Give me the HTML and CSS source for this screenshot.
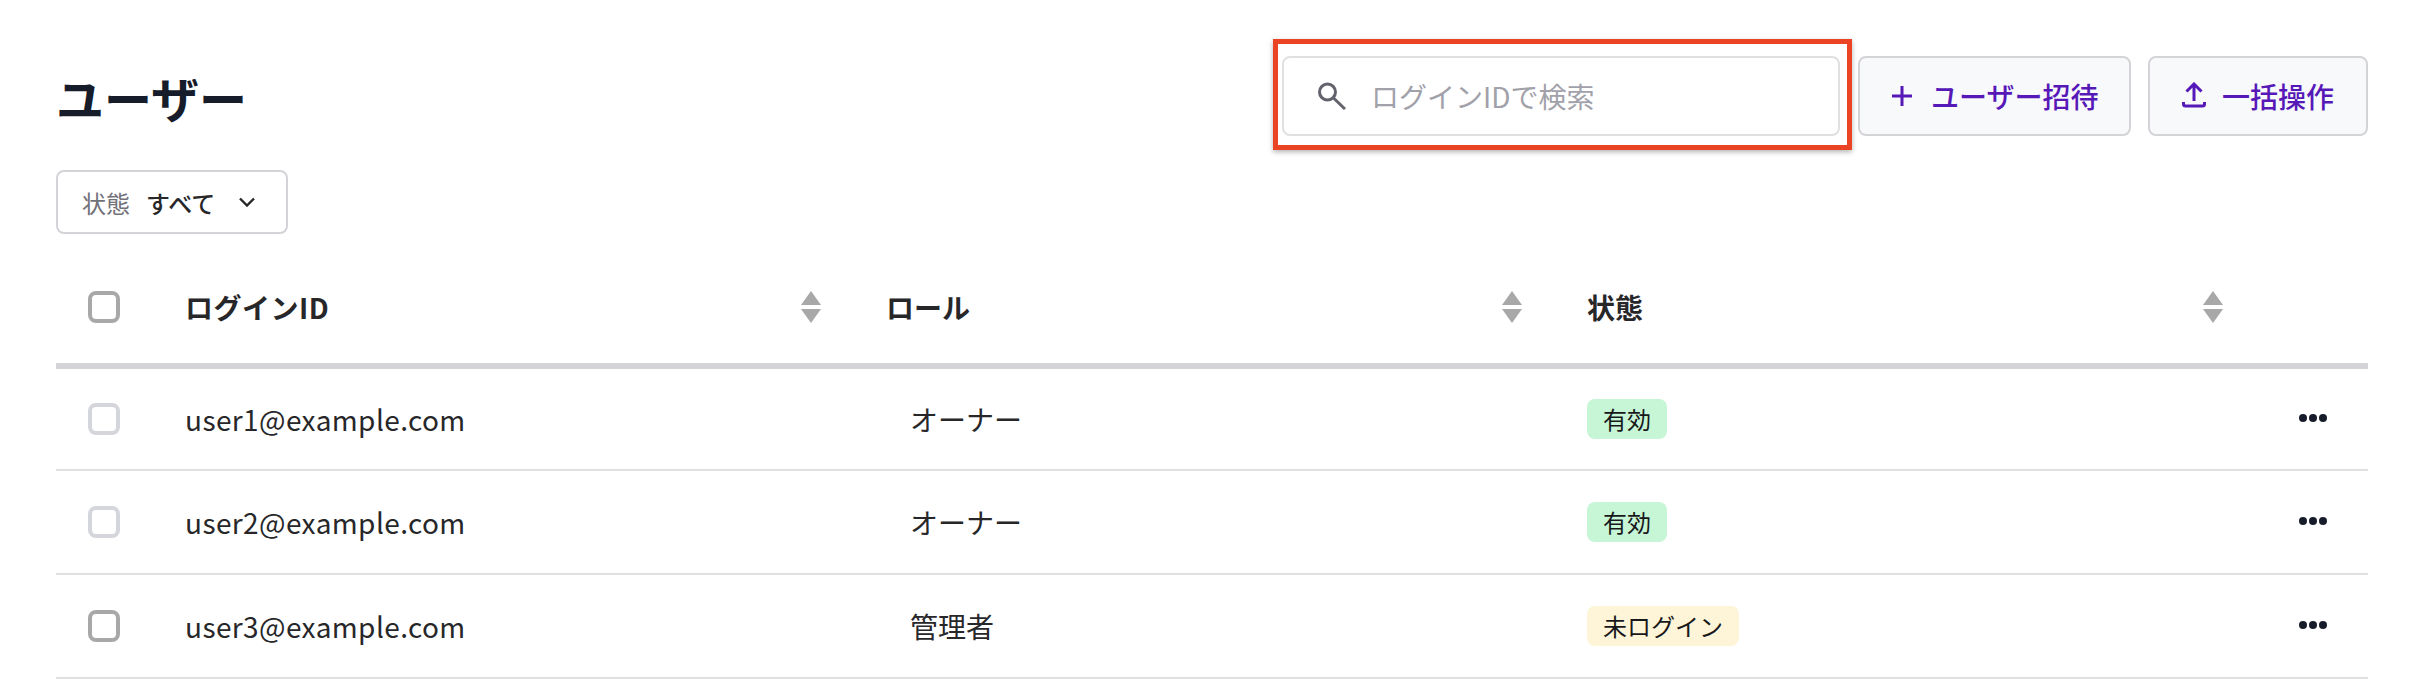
FILE: index.html
```html
<!DOCTYPE html>
<html lang="ja">
<head>
  <meta charset="utf-8">
  <title>ユーザー</title>
  <link rel="stylesheet" href="styles.css">
</head>
<body>
  <div class="page">
    <div class="topbar">
      <h1 class="title">ユーザー</h1>
      <div class="actions">
        <div class="search">
          <svg class="search-icon" viewBox="0 0 28 28"><circle cx="9.500" cy="10" r="8" fill="none" stroke="#63636e" stroke-width="3"/><path d="M15.500 16L27 27" fill="none" stroke="#63636e" stroke-width="3"/></svg>
          <span class="placeholder">ログインIDで検索</span>
          <div class="highlight"></div>
        </div>
        <button class="button invite">
          <svg class="plus-icon" viewBox="0 0 20 20"><path d="M10 0V20M0 10H20" fill="none" stroke="#5718b8" stroke-width="3"/></svg>
          ユーザー招待
        </button>
        <button class="button bulk">
          <svg class="upload-icon" viewBox="0 0 24 26"><path d="M12 19V2M4.500 9.500L12 2L19.500 9.500M1.500 20V22Q1.500 24 3.500 24H20.500Q22.500 24 22.500 22V20" fill="none" stroke="#5718b8" stroke-width="3"/></svg>
          一括操作
        </button>
      </div>
    </div>

    <div class="filter">
      <span class="filter-label">状態</span>
      <span class="filter-value">すべて</span>
      <svg class="chevron" viewBox="0 0 16 10"><path d="M1 1.500L8 8.500L15 1.500" fill="none" stroke="#27272a" stroke-width="2.400"/></svg>
    </div>

    <div class="row head">
      <div class="cell check"><span class="checkbox dark"></span></div>
      <div class="cell sortable login-head">ログインID <span class="sort"></span></div>
      <div class="cell sortable">ロール <span class="sort"></span></div>
      <div class="cell sortable">状態 <span class="sort"></span></div>
      <div class="cell"></div>
    </div>

    <div class="row">
      <div class="cell check"><span class="checkbox"></span></div>
      <div class="cell email">user1@example.com</div>
      <div class="cell role">オーナー</div>
      <div class="cell"><span class="badge green">有効</span></div>
      <div class="cell more"><span class="dots"><i></i><i></i><i></i></span></div>
    </div>
    <div class="row">
      <div class="cell check"><span class="checkbox"></span></div>
      <div class="cell email">user2@example.com</div>
      <div class="cell role">オーナー</div>
      <div class="cell"><span class="badge green">有効</span></div>
      <div class="cell more"><span class="dots"><i></i><i></i><i></i></span></div>
    </div>
    <div class="row">
      <div class="cell check"><span class="checkbox dark"></span></div>
      <div class="cell email">user3@example.com</div>
      <div class="cell role">管理者</div>
      <div class="cell"><span class="badge yellow">未ログイン</span></div>
      <div class="cell more"><span class="dots"><i></i><i></i><i></i></span></div>
    </div>
  </div>
</body>
</html>
```

FILE: styles.css
```css
html, body {
  margin: 0;
  background-color: #fff;
}
body {
  font-family: "Noto Sans CJK JP", "Noto Sans", sans-serif;
  font-size: 28px;
  color: #27272a;
}
.page {
  padding: 56px 64px 0 56px;
}
.topbar {
  display: flex;
  justify-content: space-between;
  align-items: center;
}
.title {
  margin: 2px 0 0;
  font-size: 48px;
  line-height: 72px;
  font-weight: 700;
  color: #171c2b;
}
.actions {
  display: flex;
  gap: 18px;
}
.search {
  position: relative;
  display: flex;
  align-items: center;
  box-sizing: border-box;
  width: 558px;
  height: 80px;
  padding-left: 34px;
  border: 2px solid #e0e0e3;
  border-radius: 8px;
}
.search-icon {
  width: 28px;
  height: 28px;
  margin-right: 25px;
}
.placeholder {
  color: #a1a1aa;
}
.highlight {
  position: absolute;
  top: -19px;
  left: -11px;
  right: -14px;
  bottom: -16px;
  border: 5px solid #ea4425;
  box-shadow: 0 2px 5px rgba(0, 0, 0, 0.3);
}
.button {
  display: flex;
  align-items: center;
  box-sizing: border-box;
  height: 80px;
  padding: 0 0 0 32px;
  font: inherit;
  font-weight: 500;
  white-space: nowrap;
  color: #5718b8;
  background-color: #f8f9fb;
  border: 2px solid #d4d4d8;
  border-radius: 8px;
}
.invite {
  width: 273px;
}
.bulk {
  width: 220px;
  margin-left: -1px;
}
.plus-icon {
  width: 20px;
  height: 20px;
  margin-right: 19px;
}
.upload-icon {
  width: 24px;
  height: 26px;
  margin: -2px 16px 0 0;
}
.filter {
  display: inline-flex;
  align-items: center;
  box-sizing: border-box;
  width: 232px;
  height: 64px;
  margin-top: 34px;
  padding-left: 24px;
  font-size: 24px;
  border: 2px solid #d4d4d8;
  border-radius: 8px;
}
.filter-label {
  color: #71717a;
  margin-right: 16px;
}
.filter-value {
  margin-right: 24px;
  font-weight: 500;
}
.chevron {
  width: 16px;
  height: 10px;
}
.row {
  display: grid;
  grid-template-columns: 129px 701px 701px 701px 80px;
  height: 104px;
  border-bottom: 2px solid #e0e0e3;
  box-sizing: border-box;
}
.head {
  height: 118px;
  margin-top: 17px;
  border-bottom: 6px solid #d4d4d8;
  font-weight: 700;
}
.head + .row {
  height: 102px;
}
.cell {
  display: flex;
  align-items: center;
  min-width: 0;
}
.check {
  padding-left: 32px;
}
.checkbox {
  box-sizing: border-box;
  width: 32px;
  height: 32px;
  border: 4px solid #d4d6dc;
  border-radius: 8px;
}
.checkbox.dark {
  border-color: #a8a8a8;
}
.sortable {
  justify-content: space-between;
  padding-right: 66px;
}
.login-head {
  letter-spacing: 0.5px;
}
.sort {
  display: flex;
  flex-direction: column;
  gap: 4px;
  width: 19px;
}
.sort::before,
.sort::after {
  content: "";
  width: 0;
  height: 0;
  border-left: 10px solid transparent;
  border-right: 10px solid transparent;
}
.sort::before {
  border-bottom: 14px solid #a8a8a8;
}
.sort::after {
  border-top: 14px solid #a8a8a8;
}
.email {
  letter-spacing: 0.4px;
}
.role {
  padding-left: 24px;
}
.badge {
  display: block;
  padding: 0 16px;
  font-size: 24px;
  line-height: 40px;
  color: #18181b;
  border-radius: 8px;
}
.green {
  background-color: #c6f6d5;
}
.yellow {
  background-color: #fef5d9;
}
.more {
  padding-left: 11px;
}
.dots {
  display: flex;
  gap: 2px;
  margin-top: -2px;
}
.dots i {
  width: 8px;
  height: 8px;
  border-radius: 50%;
  background-color: #171c2b;
}
```
